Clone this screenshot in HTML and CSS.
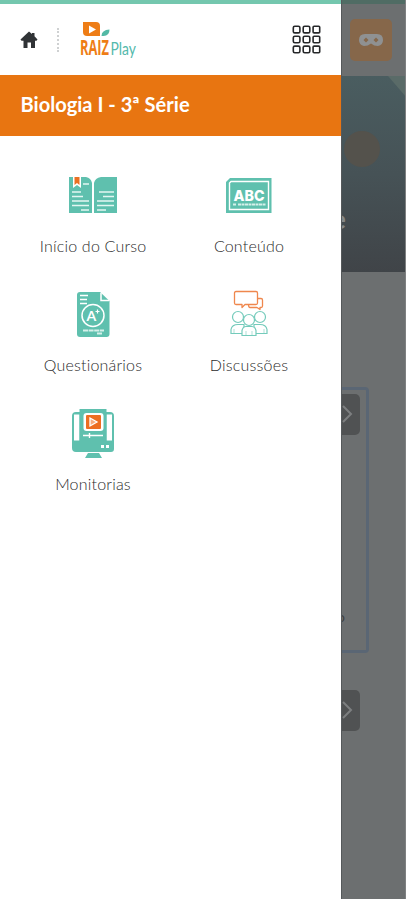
FILE: index.html
```
<!DOCTYPE html>
<html lang="pt-BR">
<head>
    <meta charset="UTF-8">
    <meta name="viewport" content="width=device-width, initial-scale=1.0">
    <title>Raiz Play</title>
    <link rel="stylesheet" href="styles.css">
</head>
<body>
    <div class="app">
        <aside class="drawer">
            <header class="topbar">
                <!-- Home -->
                <svg class="home" width="18" height="18" viewBox="0 0 18 18">
                    <path d="M9 0.5L12 3V2h2.500v3.200L17.500 8.500l-1 1.200H15V17h-4v-5.500H7.500V17h-4V9.700H1.500l-1-1.200z" fill="#303336"/>
                </svg>
                <span class="divider"></span>
                <!-- Logo -->
                <svg class="logo" width="58" height="36" viewBox="0 0 58 36">
                    <path d="M3 1h13q4 0 4 4v10H7q-4 0-4-4z" fill="#ee7d16"/>
                    <path d="M9 4.500l7 4-7 4z" fill="#fff"/>
                    <path d="M21.500 15q0-6 8-6.500 0 6.500-6 6.500z" fill="#52b9a5"/>
                    <text class="logo-raiz" x="0" y="33.500" textLength="29" lengthAdjust="spacingAndGlyphs">RAIZ</text>
                    <text class="logo-play" x="30.500" y="34" textLength="25.500" lengthAdjust="spacingAndGlyphs">Play</text>
                </svg>
                <!-- Apps -->
                <svg class="apps" width="29" height="29" viewBox="0 0 29 29">
                    <g fill="none" stroke="#26282a" stroke-width="1.600">
                        <rect x="1.300" y="1.300" width="6.600" height="6.600" rx="1.500"/>
                        <rect x="11.200" y="1.300" width="6.600" height="6.600" rx="1.500"/>
                        <rect x="21.100" y="1.300" width="6.600" height="6.600" rx="1"/>
                        <rect x="1.300" y="11.200" width="6.600" height="6.600" rx="1.500"/>
                        <rect x="11.200" y="11.200" width="6.600" height="6.600" rx="1.500"/>
                        <rect x="21.100" y="11.200" width="6.600" height="6.600" rx="1"/>
                        <rect x="1.300" y="21.100" width="6.600" height="6.600" rx="1.500"/>
                        <rect x="11.200" y="21.100" width="6.600" height="6.600" rx="1.500"/>
                        <rect x="21.100" y="21.100" width="6.600" height="6.600" rx="1"/>
                    </g>
                </svg>
            </header>

            <h1 class="course">Biologia I - 3ª Série</h1>

            <nav class="menu">
                <a class="item">
                    <svg width="50" height="50" viewBox="0 0 50 50">
                        <path d="M1 7h17q5 1 6 6v30H1zM26 13q1-5 7-6h16v36H26z" fill="#5fc0ae"/>
                        <path d="M5 6h8v12l-4-3-4 3z" fill="#fff"/>
                        <path d="M6.500 7h5v8L9 13l-2.500 2z" fill="#ea7023"/>
                        <path d="M15 14h6M4 22h9M4 26.500h11M4 31h17M4 35.500h17M13 40h8M31 22h15M35 26.500h11M29 31h17M29 35.500h17M29 40h9" stroke="#e4f6f2" stroke-width="1.500"/>
                    </svg>
                    <span class="label">Início do Curso</span>
                </a>
                <a class="item">
                    <svg width="50" height="50" viewBox="0 0 50 50">
                        <path d="M6 8h41.500v35H2V12z" fill="#5fc0ae"/>
                        <path d="M7 11.500h37.500v28H5.500V13z" fill="none" stroke="#fff" stroke-width="1.400"/>
                        <text class="icon-abc" x="9.500" y="31" textLength="31" lengthAdjust="spacingAndGlyphs">ABC</text>
                        <path d="M9 34.500h3M14 34.500h28" stroke="#d5f0ea" stroke-width="2" stroke-dasharray="3 .5"/>
                    </svg>
                    <span class="label">Conteúdo</span>
                </a>
                <a class="item">
                    <svg width="50" height="50" viewBox="0 0 50 50">
                        <path d="M12 3h20l9.500 9v33q0 3-3 3H12q-3 0-3-3V6q0-3 3-3z" fill="#5fc0ae"/>
                        <path d="M33 4v7.500h8M12 6.500h8M12 10.500h7M12 14.500h7" fill="none" stroke="#fff" stroke-width="1.500"/>
                        <circle cx="25" cy="26.500" r="11" fill="none" stroke="#fff" stroke-width="1.500"/>
                        <text class="icon-grade" x="18.500" y="32">A</text>
                        <path d="M27.500 22.500h4M29.500 20.500v4" stroke="#fff" stroke-width="1.200"/>
                        <path d="M15 41.500h21M29 44.500h5" stroke="#d5f0ea" stroke-width="1.800" stroke-dasharray="5 .6"/>
                    </svg>
                    <span class="label">Questionários</span>
                </a>
                <a class="item">
                    <svg width="50" height="50" viewBox="0 0 50 50">
                        <g fill="none" stroke="#ef874d" stroke-width="1.300" stroke-linejoin="round">
                            <path d="M12 2.500h20q1.500 0 1.500 1.500v10q0 1.500-1.500 1.500H21l-3 3v-3h-6q-1.500 0-1.500-1.500V4q0-1.500 1.500-1.500z"/>
                            <path d="M33.500 9.500H37q1.500 0 1.500 1.500v6q0 1.500-1.500 1.500h-1v2l-3-2h-7q-1.500 0-1.500-3"/>
                        </g>
                        <g fill="#fff" stroke="#74cbbb" stroke-width="1.200">
                            <path d="M7 44.500v-4q1-5 7-5h6v9zM43 44.500v-4q-1-5-7-5h-6v9z"/>
                            <circle cx="14" cy="28" r="5.500"/>
                            <circle cx="36" cy="28" r="5.500"/>
                            <path d="M18 46.500v-5q1-4 4-4h6q3 0 4 4v5z"/>
                            <circle cx="25" cy="31" r="5.500"/>
                        </g>
                        <path d="M10 40v4M40 40v4M22 42v4M28 42v4" stroke="#9bd9cd" stroke-width=".8"/>
                    </svg>
                    <span class="label">Discussões</span>
                </a>
                <a class="item">
                    <svg width="50" height="50" viewBox="0 0 50 50">
                        <path d="M8 4h4v32h26V4h4q4 0 4 4v33q0 3-3 3H8q-4 0-4-4V8q0-4 4-4z" fill="#5fc0ae"/>
                        <path d="M6 6.500h5.500v26H6zM38.500 6.500H44v26h-5.500z" fill="#fff"/>
                        <path d="M11.500 1h27v36h-27z" fill="#5fc0ae"/>
                        <rect x="15.500" y="5" width="20" height="18" rx="3" fill="#fff"/>
                        <rect x="18" y="7" width="15" height="14" rx="1" fill="#ed6e22"/>
                        <path d="M22 10l7 4-7 4z" fill="#f7ac80" stroke="#fff" stroke-width="1.300"/>
                        <path d="M15 27.500h20M21.500 25v5" stroke="#fff" stroke-width="1.400"/>
                        <path d="M33 37h3v3h-3zM38 37h3v3h-3z" fill="#fff"/>
                        <path d="M20 45h11l3 5H17z" fill="#5fc0ae"/>
                    </svg>
                    <span class="label">Monitorias</span>
                </a>
            </nav>
        </aside>

        <!-- Page behind the open drawer -->
        <main class="page">
            <div class="page-top">
                <span class="avatar">
                    <svg width="26" height="14" viewBox="0 0 26 14">
                        <path d="M7 1h12q6 0 6 6 0 5-5 6-4 0-7-2.500Q10 13 6 13 1 12 1 7q0-6 6-6z" fill="#8f9192"/>
                        <path d="M8 4.500l2.500 2.500L8 9.500 5.500 7zM18 4.500l2.500 2.500L18 9.500 15.500 7z" fill="#86674a"/>
                    </svg>
                </span>
            </div>
            <div class="hero">
                <svg width="65" height="196" viewBox="0 0 65 196">
                    <path d="M46 0h19v22z" fill="#5a6b68"/>
                    <circle cx="20" cy="73" r="18" fill="#54524c"/>
                    <text class="hero-text" x="-10" y="153">e</text>
                </svg>
            </div>
            <div class="cards">
                <div class="card active">
                    <span class="next">
                        <svg width="18" height="40" viewBox="0 0 18 40"><path d="M1 12l8 8-8 8" fill="none" stroke="#7d7f80" stroke-width="2"/></svg>
                    </span>
                    <span class="card-text">o</span>
                </div>
                <div class="card">
                    <span class="next">
                        <svg width="18" height="40" viewBox="0 0 18 40"><path d="M1 12l8 8-8 8" fill="none" stroke="#7d7f80" stroke-width="2"/></svg>
                    </span>
                </div>
            </div>
        </main>
    </div>
</body>
</html>
```
FILE: styles.css
```
* {
    box-sizing: border-box;
}

body {
    margin: 0;
    font-family: Lato, "Liberation Sans", sans-serif;
    background: #fff;
}

.app {
    display: flex;
    width: 406px;
    height: 900px;
    overflow: hidden;
}

/* Drawer */
.drawer {
    width: 341px;
    flex: none;
}

.topbar {
    display: flex;
    align-items: center;
    height: 75px;
    padding: 0 20px;
    border-top: 4px solid #74c7ae;
}

.home {
    margin-bottom: -1px;
}

.divider {
    height: 24px;
    margin-left: 19px;
    border-left: 2px dotted #cfd1d2;
}

.logo {
    margin-left: 21px;
    margin-top: -2px;
    overflow: visible;
}

.logo-raiz {
    font-family: "Open Sans", sans-serif;
    font-weight: 700;
    font-size: 21px;
    fill: #ee7d16;
}

.logo-play {
    font-size: 16.5px;
    fill: #54b9ac;
}

.apps {
    margin-left: auto;
}

.course {
    height: 61px;
    margin: 0;
    padding-left: 20.5px;
    background: #e87511;
    color: #fff;
    font-size: 20.1px;
    font-weight: 700;
    line-height: 58px;
    white-space: nowrap;
}

.menu {
    display: grid;
    grid-template-columns: 156px 156px;
    grid-auto-rows: 119px;
    padding: 34px 0 0 15px;
}

.item {
    display: flex;
    flex-direction: column;
    align-items: center;
    gap: 15px;
}

.label {
    color: #2c2c2c;
    font-size: 16px;
    font-weight: 300;
    line-height: 21px;
    letter-spacing: 0.2px;
    white-space: nowrap;
}

.icon-abc {
    font-family: Inter, sans-serif;
    font-size: 15px;
    font-weight: 800;
    fill: #fff;
}

.icon-grade {
    font-size: 14px;
    font-weight: 700;
    fill: #fff;
}

/* Dimmed page */
.page {
    width: 65px;
    height: 899px;
    overflow: hidden;
    background: #6c6f70;
    border-left: 1px solid #55595b;
    border-right: 1px solid #7f8182;
}

.page-top {
    height: 76px;
    padding: 15px 0 0 8px;
    border-top: 4px solid #506c64;
}

.avatar {
    display: flex;
    align-items: center;
    justify-content: center;
    width: 42px;
    height: 42px;
    border-radius: 5px;
    background: #86674a;
}

.hero {
    height: 196px;
    background: linear-gradient(#4a5d60, #465256 50%, #404448);
}

.hero svg {
    display: block;
}

.hero-text {
    font-size: 26px;
    font-weight: 700;
    fill: #85898a;
}

.cards {
    padding-top: 115px;
}

.card {
    display: flex;
    flex-direction: column;
    width: 27px;
    height: 266px;
    padding-top: 4px;
    margin-bottom: 30px;
    border: 3px solid transparent;
    border-left: 0;
    border-radius: 0 4px 4px 0;
}

.card.active {
    border-color: #5a6674;
}

.next {
    width: 18px;
    height: 41px;
    border-radius: 0 5px 5px 0;
    background: #505253;
}

.card-text {
    margin: 173px 0 0 -5px;
    color: #3f4142;
    font-size: 14px;
}
```
